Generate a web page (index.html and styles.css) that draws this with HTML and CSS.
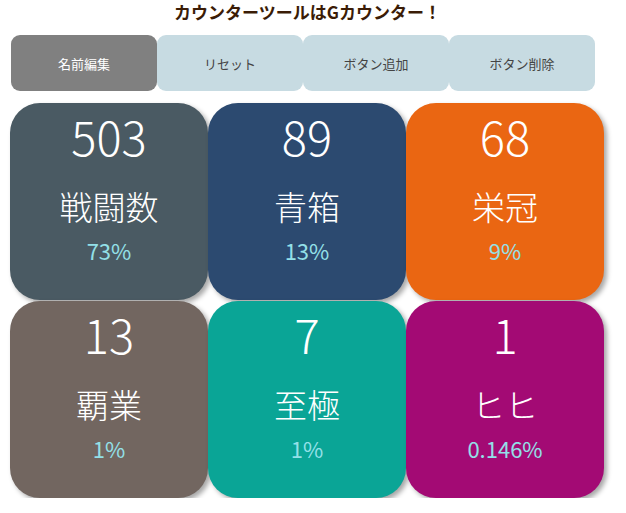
FILE: index.html
```html
<!DOCTYPE html>
<html lang="ja">
<head>
<meta charset="utf-8">
<title>Gカウンター</title>
<link rel="stylesheet" href="styles.css">
</head>
<body>
<div class="app">
  <h1 class="title">カウンターツールはGカウンター！</h1>
  <div class="toolbar">
    <button class="btn active">名前編集</button>
    <button class="btn">リセット</button>
    <button class="btn">ボタン追加</button>
    <button class="btn">ボタン削除</button>
  </div>
  <div class="grid">
    <div class="card c1"><div class="num">503</div><div class="label">戦闘数</div><div class="pct">73%</div></div>
    <div class="card c2"><div class="num">89</div><div class="label">青箱</div><div class="pct">13%</div></div>
    <div class="card c3"><div class="num">68</div><div class="label">栄冠</div><div class="pct">9%</div></div>
    <div class="card c4"><div class="num">13</div><div class="label">覇業</div><div class="pct">1%</div></div>
    <div class="card c5"><div class="num">7</div><div class="label">至極</div><div class="pct">1%</div></div>
    <div class="card c6"><div class="num">1</div><div class="label">ヒヒ</div><div class="pct">0.146%</div></div>
  </div>
</div>
</body>
</html>
```
FILE: styles.css
```css
* { box-sizing: border-box; }
html, body { margin: 0; padding: 0; background: #fff; }
body {
  font-family: "Noto Sans CJK JP", "Noto Sans", sans-serif;
}
.app {
  width: 605px;
  padding-left: 10px;
}
.title {
  margin: 0;
  height: 35px;
  padding-top: 1px;
  font-size: 17px;
  line-height: 22px;
  font-weight: 700;
  color: #3b1c06;
  text-align: center;
}
.toolbar {
  display: flex;
  padding-left: 1px;
}
.btn {
  width: 146px;
  height: 56px;
  border: none;
  border-radius: 9px;
  background: #c7dbe2;
  color: #444;
  font-family: "Noto Sans CJK JP", sans-serif;
  font-size: 13px;
  padding: 0;
}
.btn.active {
  background: #808080;
  color: #fff;
}
.grid {
  margin-top: 12px;
  display: grid;
  grid-template-columns: repeat(3, 198px);
  grid-auto-rows: 197px;
  row-gap: 1px;
}
.card {
  border-radius: 30px;
  box-shadow: 3px 3px 5px rgba(0, 0, 0, 0.35);
  display: flex;
  flex-direction: column;
  align-items: center;
  color: #fff;
  padding-top: 3px;
}
.num {
  font-size: 47px;
  font-weight: 300;
  line-height: 60px;
}
.label {
  margin-top: 18px;
  font-size: 33px;
  font-weight: 300;
  line-height: 44px;
}
.pct {
  margin-top: 7px;
  font-size: 22px;
  font-weight: 400;
  line-height: 30px;
  color: #93e0e8;
}
.c1 { background: #4a5a63; }
.c2 { background: #2c4a70; }
.c3 { background: #ea6612; }
.c4 { background: #726660; }
.c5 { background: #0aa596; }
.c6 { background: #a30a74; }
```
